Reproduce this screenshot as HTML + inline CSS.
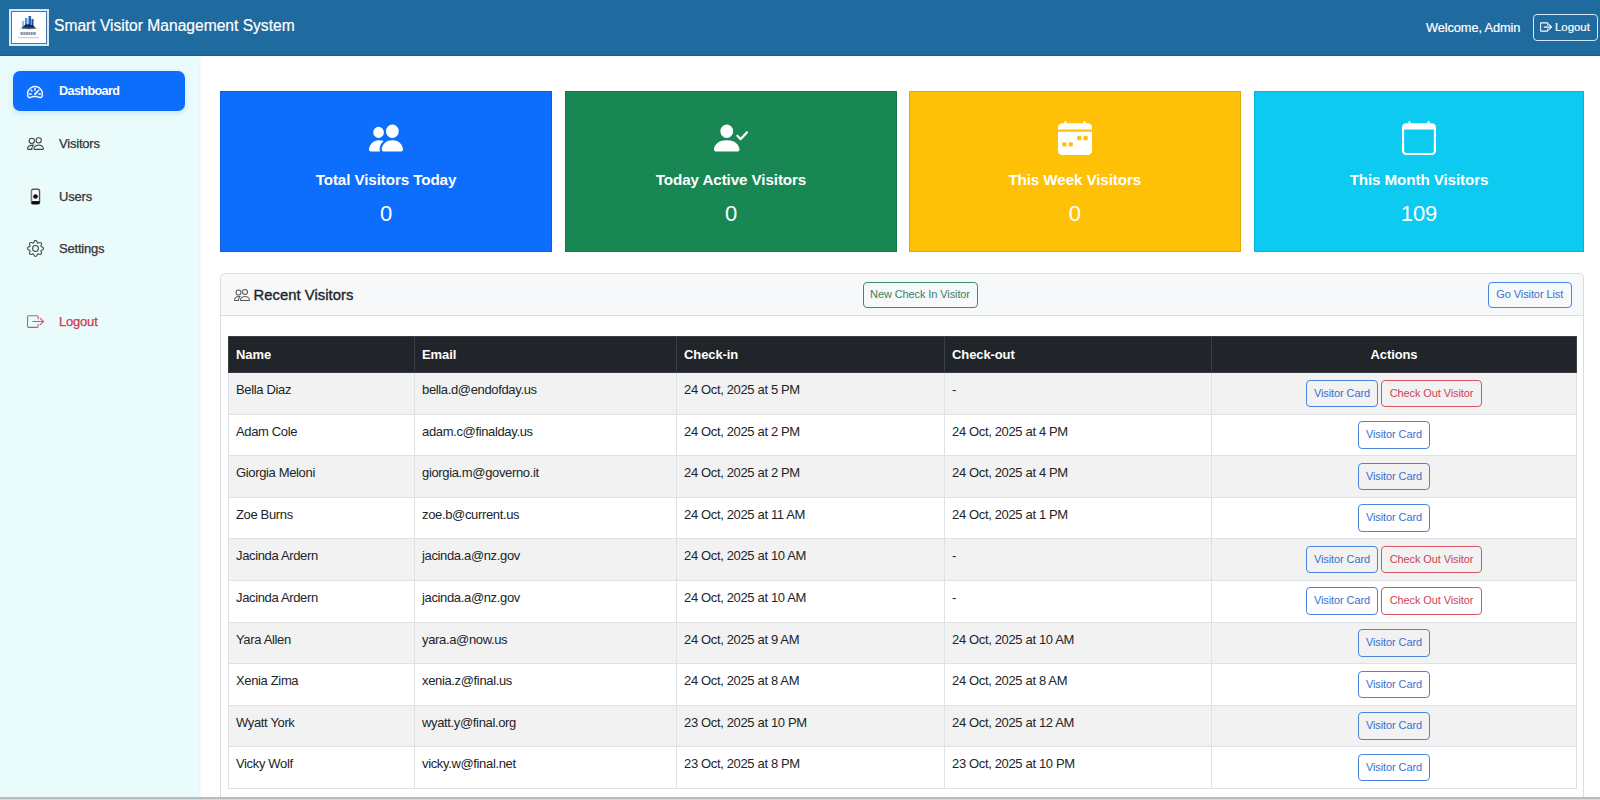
<!DOCTYPE html>
<html><head><meta charset="utf-8">
<style>
*{box-sizing:border-box;margin:0;padding:0}
html,body{width:1600px;height:800px;overflow:hidden;background:#fff;font-family:"Liberation Sans",sans-serif;color:#212529}
svg{display:block}
#hdr{position:absolute;left:0;top:0;width:1600px;height:56px;background:#1f6a9e;border-bottom:1px solid #1c5a86;z-index:2}
#logo{position:absolute;left:9px;top:9px;width:40px;height:37px;background:#fff;border:2px solid #cfe9ff;box-shadow:inset 0 0 0 1px #4a78a0}
#logo svg{position:absolute;left:0px;top:0px}
#title{position:absolute;left:54px;top:17px;font-size:15.6px;line-height:18px;color:#fff;white-space:nowrap;letter-spacing:0px;-webkit-text-stroke:0.2px #fff}
#welcome{position:absolute;left:1426px;top:20px;font-size:12.8px;line-height:15px;color:#fff;white-space:nowrap;letter-spacing:-0.1px;-webkit-text-stroke:0.2px #fff}
#hlogout{position:absolute;left:1533px;top:14px;width:65px;height:27px;border:1.8px solid #d2e8fc;-webkit-text-stroke:0.2px #fff;border-radius:4px;color:#fff;font-size:11.4px}
#hlogout svg{position:absolute;left:5.5px;top:6px}
#hlogout span{position:absolute;left:21px;top:6px;line-height:13px}
#side{position:absolute;left:0;top:56px;width:199px;height:744px;background:#eafbfb;box-shadow:1px 0 2px rgba(0,0,0,.08)}
.nav{position:absolute;left:13px;width:172px;height:40px;border-radius:7px;font-size:13px;color:#333}
.nav svg{position:absolute;left:14px;top:12px}
.nav .tx{position:absolute;left:46px;top:13px;line-height:15px;white-space:nowrap;letter-spacing:-0.2px;-webkit-text-stroke:0.25px currentColor}
.nav.active{background:#0d6efd;color:#fff;font-weight:bold;box-shadow:0 2px 6px rgba(13,110,253,.16)}
.nav.active .tx{letter-spacing:-0.6px;font-size:12.6px;-webkit-text-stroke:0}
.stat{position:absolute;top:91px;height:161px;color:#fff;text-align:center}
.stat svg{position:absolute;left:50%;top:30.25px;margin-left:-17px}
.stat svg.pp{top:29.2px}
.stat{box-shadow:inset 0 0 0 1px rgba(0,0,0,.12)}
.stat .st{position:absolute;left:0;right:0;top:79.5px;font-size:15.2px;line-height:18px;font-weight:bold;letter-spacing:-0.1px;white-space:nowrap}
.stat .sn{position:absolute;left:0;right:0;top:110.5px;font-size:22px;line-height:24px;white-space:nowrap}
.card{position:absolute;left:220px;top:273px;width:1364px;height:540px;border:1px solid #dcdcdc;border-radius:5px}
.chead{position:absolute;left:0;top:0;right:0;height:42px;background:#f7f8f9;border-bottom:1px solid #dcdcdc;border-radius:5px 5px 0 0}
.chead svg{position:absolute;left:13px;top:13px}
.chead .ct{position:absolute;left:32.5px;top:12.5px;font-size:14.8px;line-height:17px;letter-spacing:0.05px;color:#212529;white-space:nowrap;-webkit-text-stroke:0.35px #212529}
.btn{position:absolute;display:block;border:1.3px solid;border-radius:4px;font-size:11px;text-align:center;white-space:nowrap;background:transparent;letter-spacing:-0.1px}
.bp{border-color:#4a84dc;color:#3a6fcf}
.bd{border-color:#d95563;color:#cc4353}
.bs{border-color:#3f8c6c;color:#3a7f62}
table{position:absolute;left:228px;top:336px;width:1349px;border-collapse:collapse;font-size:13px}
th{background:#212529;color:#fff;text-align:left;height:36px;font-weight:bold;border:1px solid #3a3f44;padding:0 7px;letter-spacing:-0.1px;font-size:13px}
td{height:41.6px;border:1px solid #dee2e6;padding:0 7px;vertical-align:top;padding-top:9px;line-height:15px;white-space:nowrap;letter-spacing:-0.35px;color:#212529}
td.a{position:relative;padding:0}
td.a .w{position:absolute;left:0;right:0;top:6.5px;height:28px;text-align:center;font-size:0}
td.a .btn{position:relative;display:inline-block;height:27.5px;line-height:25px;font-size:11px;vertical-align:top}
tr.s td{background:#f2f2f2}
#bar{position:absolute;left:0;top:797px;width:1600px;height:3px;background:linear-gradient(#b8bcbe 0,#b8bcbe 2px,#d6d9db 2px)}
</style></head><body>
<div id="hdr">
  <div id="logo"><svg width="36" height="34" viewBox="0 0 36 34"><rect x="11" y="10" width="2.2" height="7" fill="#8fc0ea"/><rect x="14" y="7" width="2.4" height="10" fill="#4f8fd6"/><rect x="17.5" y="5" width="2.6" height="12" fill="#2a62b0"/><rect x="20.5" y="8" width="2" height="9" fill="#1d4f96"/><path d="M10.5 17.6c1.5-2.5 3-3 4.5-4.5 1 .8 2 .6 3-.6 1.2 1.6 2.6 1.8 3.5 1.2 1.2 1.3 2.5 2.4 3.5 3.9-3 .8-11.5.8-14.5 0z" fill="#0e2d5c"/><rect x="8.5" y="16.8" width="19" height=".6" fill="#9fb3c8"/><path d="M9.5 21h2.2v3H9.5zM12.3 21h1.6v3h-1.6zM14.5 21h2.4v3h-2.4zM17.5 21h1.5v3H17.5zM19.5 21h2.2v3h-2.2zM22.3 21h2.4v3h-2.4z" fill="#8194a8"/><rect x="7" y="26" width="21" height="1.2" fill="#c3cfdb"/></svg></div>
  <div id="title">Smart Visitor Management System</div>
  <div id="welcome">Welcome, Admin</div>
  <div id="hlogout"><svg width="12" height="12" viewBox="0 0 16 16" fill="#fff" stroke="#fff" stroke-width=".6"><path fill-rule="evenodd" d="M10 12.5a.5.5 0 0 1-.5.5h-8a.5.5 0 0 1-.5-.5v-9a.5.5 0 0 1 .5-.5h8a.5.5 0 0 1 .5.5v2a.5.5 0 0 0 1 0v-2A1.5 1.5 0 0 0 9.5 2h-8A1.5 1.5 0 0 0 0 3.5v9A1.5 1.5 0 0 0 1.5 14h8a1.5 1.5 0 0 0 1.5-1.5v-2a.5.5 0 0 0-1 0z"/><path fill-rule="evenodd" d="M15.854 8.354a.5.5 0 0 0 0-.708l-3-3a.5.5 0 0 0-.708.708L14.293 7.5H5.5a.5.5 0 0 0 0 1h8.793l-2.147 2.146a.5.5 0 0 0 .708.708z"/></svg><span>Logout</span></div>
</div>
<div id="side">
  <div class="nav active" style="top:14.5px"><svg width="16" height="16" viewBox="0 0 16 16" fill="#fff" stroke="#fff" stroke-width=".5" style="left:13.5px;top:13.5px"><path d="M8 4a.5.5 0 0 1 .5.5V6a.5.5 0 0 1-1 0V4.5A.5.5 0 0 1 8 4M3.732 5.732a.5.5 0 0 1 .707 0l.915.914a.5.5 0 1 1-.708.708l-.914-.915a.5.5 0 0 1 0-.707M2 10a.5.5 0 0 1 .5-.5h1.586a.5.5 0 0 1 0 1H2.5A.5.5 0 0 1 2 10m9.5 0a.5.5 0 0 1 .5-.5h1.5a.5.5 0 0 1 0 1H12a.5.5 0 0 1-.5-.5m.754-4.246a.39.39 0 0 0-.527-.02L7.547 9.31a.91.91 0 1 0 1.302 1.258l3.434-4.297a.39.39 0 0 0-.029-.518z"/><path fill-rule="evenodd" d="M0 10a8 8 0 1 1 15.547 2.661c-.442 1.253-1.845 1.602-2.932 1.25C11.309 13.488 9.475 13 8 13c-1.474 0-3.310.488-4.615.911-1.087.352-2.490.003-2.932-1.250A8 8 0 0 1 0 10m8-7a7 7 0 0 0-6.603 9.329c.203.575.923.876 1.680.630C4.397 12.533 6.358 12 8 12s3.604.532 4.923.96c.757.245 1.477-.056 1.680-.631A7 7 0 0 0 8 3"/></svg><div class="tx">Dashboard</div></div>
  <div class="nav" style="top:66.5px"><svg width="17" height="17" viewBox="0 0 16 16" fill="#444"><path d="M15 14s1 0 1-1-1-4-5-4-5 3-5 4 1 1 1 1zm-7.978-1L7 12.996c.001-.264.167-1.03.76-1.72C8.312 10.629 9.282 10 11 10c1.717 0 2.687.63 3.24 1.276.593.69.758 1.457.76 1.72l-.008.002-.014.002zM11 7a2 2 0 1 0 0-4 2 2 0 0 0 0 4m3-2a3 3 0 1 1-6 0 3 3 0 0 1 6 0M6.936 9.28a6 6 0 0 0-1.23-.247A7 7 0 0 0 5 9c-4 0-5 3-5 4q0 1 1 1h4.216A2.240 2.240 0 0 1 5 13c0-1.010.377-2.042 1.090-2.904.243-.294.526-.569.846-.816M4.920 10A5.500 5.500 0 0 0 4 13H1c0-.26.164-1.030.760-1.724.545-.636 1.492-1.256 3.160-1.275ZM1.500 5.500a3 3 0 1 1 6 0 3 3 0 0 1-6 0m3-2a2 2 0 1 0 0 4 2 2 0 0 0 0-4"/></svg><div class="tx">Visitors</div></div>
  <div class="nav" style="top:119.5px"><svg width="17" height="17" viewBox="0 0 16 16"><rect x="4.2" y="1.2" width="7.6" height="13.8" rx="1.6" fill="#fff" stroke="#555" stroke-width="1.3"/><circle cx="8" cy="8" r="2.2" fill="#111"/><rect x="4.2" y="12.3" width="7.6" height="2.7" fill="#0b0b14"/><rect x="3.6" y="2" width="0.7" height="12" fill="#e9b878" opacity=".7"/></svg><div class="tx">Users</div></div>
  <div class="nav" style="top:171.5px"><svg width="17" height="17" viewBox="0 0 16 16" fill="#444"><path d="M8 4.754a3.246 3.246 0 1 0 0 6.492 3.246 3.246 0 0 0 0-6.492M5.754 8a2.246 2.246 0 1 1 4.492 0 2.246 2.246 0 0 1-4.492 0"/><path d="M9.796 1.343c-.527-1.790-3.065-1.790-3.592 0l-.094.319a.873.873 0 0 1-1.255.52l-.292-.16c-1.640-.892-3.433.902-2.540 2.541l.159.292a.873.873 0 0 1-.52 1.255l-.319.094c-1.790.527-1.790 3.065 0 3.592l.319.094a.873.873 0 0 1 .52 1.255l-.16.292c-.892 1.640.901 3.434 2.541 2.540l.292-.159a.873.873 0 0 1 1.255.52l.094.319c.527 1.790 3.065 1.790 3.592 0l.094-.319a.873.873 0 0 1 1.255-.52l.292.16c1.640.893 3.434-.902 2.540-2.541l-.159-.292a.873.873 0 0 1 .52-1.255l.319-.094c1.790-.527 1.790-3.065 0-3.592l-.319-.094a.873.873 0 0 1-.52-1.255l.16-.292c.893-1.640-.902-3.433-2.541-2.540l-.292.159a.873.873 0 0 1-1.255-.52zm-2.633.283c.246-.835 1.428-.835 1.674 0l.094.319a1.873 1.873 0 0 0 2.693 1.115l.291-.16c.764-.415 1.600.42 1.184 1.185l-.159.292a1.873 1.873 0 0 0 1.116 2.692l.318.094c.835.246.835 1.428 0 1.674l-.319.094a1.873 1.873 0 0 0-1.115 2.693l.16.291c.415.764-.42 1.600-1.185 1.184l-.291-.159a1.873 1.873 0 0 0-2.693 1.116l-.094.318c-.246.835-1.428.835-1.674 0l-.094-.319a1.873 1.873 0 0 0-2.692-1.115l-.292.16c-.764.415-1.600-.42-1.184-1.185l.159-.291A1.873 1.873 0 0 0 1.945 8.930l-.319-.094c-.835-.246-.835-1.428 0-1.674l.319-.094A1.873 1.873 0 0 0 3.060 4.377l-.16-.292c-.415-.764.42-1.600 1.185-1.184l.292.159a1.873 1.873 0 0 0 2.692-1.115z"/></svg><div class="tx">Settings</div></div>
  <div class="nav" style="top:244.5px;color:#cf3a4c"><svg width="17" height="17" viewBox="0 0 16 16" fill="#c9596a"><path fill-rule="evenodd" d="M10 12.5a.5.5 0 0 1-.5.5h-8a.5.5 0 0 1-.5-.5v-9a.5.5 0 0 1 .5-.5h8a.5.5 0 0 1 .5.5v2a.5.5 0 0 0 1 0v-2A1.5 1.5 0 0 0 9.5 2h-8A1.5 1.5 0 0 0 0 3.5v9A1.5 1.5 0 0 0 1.5 14h8a1.5 1.5 0 0 0 1.5-1.5v-2a.5.5 0 0 0-1 0z"/><path fill-rule="evenodd" d="M15.854 8.354a.5.5 0 0 0 0-.708l-3-3a.5.5 0 0 0-.708.708L14.293 7.5H5.5a.5.5 0 0 0 0 1h8.793l-2.147 2.146a.5.5 0 0 0 .708.708z"/></svg><div class="tx">Logout</div></div>
</div>

<div class="stat" style="left:220px;width:332px;background:#0d6efd"><svg class="pp" width="34" height="36" viewBox="0 0 16 16" preserveAspectRatio="none" fill="#fff"><path d="M7 14s-1 0-1-1 1-4 5-4 5 3 5 4-1 1-1 1zm4-6a3 3 0 1 0 0-6 3 3 0 0 0 0 6m-5.784 6A2.24 2.24 0 0 1 5 13c0-1.355.68-2.75 1.936-3.72A6.3 6.3 0 0 0 5 9c-4 0-5 3-5 4s1 1 1 1zM4.5 8a2.5 2.5 0 1 0 0-5 2.5 2.5 0 0 0 0 5"/></svg><div class="st">Total Visitors Today</div><div class="sn">0</div></div>
<div class="stat" style="left:565px;width:332px;background:#198754"><svg class="pp" width="34" height="36" viewBox="0 0 16 16" preserveAspectRatio="none" fill="#fff"><path fill-rule="evenodd" d="M15.854 5.146a.5.5 0 0 1 0 .708l-3 3a.5.5 0 0 1-.708 0l-1.5-1.5a.5.5 0 0 1 .708-.708L12.5 7.793l2.646-2.647a.5.5 0 0 1 .708 0"/><path d="M1 14s-1 0-1-1 1-4 6-4 6 3 6 4-1 1-1 1zm5-6a3 3 0 1 0 0-6 3 3 0 0 0 0 6"/></svg><div class="st">Today Active Visitors</div><div class="sn">0</div></div>
<div class="stat" style="left:909px;width:331.5px;background:#ffc107"><svg width="34" height="34" viewBox="0 0 16 16" fill="#fff"><path d="M4 .5a.5.5 0 0 0-1 0V1H2a2 2 0 0 0-2 2v1h16V3a2 2 0 0 0-2-2h-1V.5a.5.5 0 0 0-1 0V1H4zM16 14V5H0v9a2 2 0 0 0 2 2h12a2 2 0 0 0 2-2M9.5 7h1a.5.5 0 0 1 .5.5v1a.5.5 0 0 1-.5.5h-1a.5.5 0 0 1-.5-.5v-1a.5.5 0 0 1 .5-.5m3 0h1a.5.5 0 0 1 .5.5v1a.5.5 0 0 1-.5.5h-1a.5.5 0 0 1-.5-.5v-1a.5.5 0 0 1 .5-.5M2 10.5a.5.5 0 0 1 .5-.5h1a.5.5 0 0 1 .5.5v1a.5.5 0 0 1-.5.5h-1a.5.5 0 0 1-.5-.5zm3.5-.5h1a.5.5 0 0 1 .5.5v1a.5.5 0 0 1-.5.5h-1a.5.5 0 0 1-.5-.5v-1a.5.5 0 0 1 .5-.5"/></svg><div class="st">This Week Visitors</div><div class="sn">0</div></div>
<div class="stat" style="left:1254px;width:330px;background:#0dcaf0"><svg width="34" height="34" viewBox="0 0 16 16" fill="#fff"><path d="M3.5 0a.5.5 0 0 1 .5.5V1h8V.5a.5.5 0 0 1 1 0V1h1a2 2 0 0 1 2 2v11a2 2 0 0 1-2 2H2a2 2 0 0 1-2-2V3a2 2 0 0 1 2-2h1V.5a.5.5 0 0 1 .5-.5M1 4v10a1 1 0 0 0 1 1h12a1 1 0 0 0 1-1V4z"/></svg><div class="st">This Month Visitors</div><div class="sn">109</div></div>

<div class="card"><div class="chead"><svg width="16" height="16" viewBox="0 0 16 16" fill="#555"><path d="M15 14s1 0 1-1-1-4-5-4-5 3-5 4 1 1 1 1zm-7.978-1L7 12.996c.001-.264.167-1.03.76-1.72C8.312 10.629 9.282 10 11 10c1.717 0 2.687.63 3.24 1.276.593.69.758 1.457.76 1.72l-.008.002-.014.002zM11 7a2 2 0 1 0 0-4 2 2 0 0 0 0 4m3-2a3 3 0 1 1-6 0 3 3 0 0 1 6 0M6.936 9.28a6 6 0 0 0-1.23-.247A7 7 0 0 0 5 9c-4 0-5 3-5 4q0 1 1 1h4.216A2.240 2.240 0 0 1 5 13c0-1.010.377-2.042 1.090-2.904.243-.294.526-.569.846-.816M4.920 10A5.500 5.500 0 0 0 4 13H1c0-.26.164-1.030.760-1.724.545-.636 1.492-1.256 3.160-1.275ZM1.500 5.500a3 3 0 1 1 6 0 3 3 0 0 1-6 0m3-2a2 2 0 1 0 0 4 2 2 0 0 0 0-4"/></svg><div class="ct">Recent Visitors</div></div></div>
<div class="btn bs" style="left:862.5px;top:282px;width:115px;height:26px;line-height:23.5px">New Check In Visitor</div>
<div class="btn bp" style="left:1488px;top:282px;width:83.5px;height:26px;line-height:23.5px">Go Visitor List</div>

<table>
<tr><th style="width:186px">Name</th><th style="width:262px">Email</th><th style="width:268px">Check-in</th><th style="width:267px">Check-out</th><th style="text-align:center">Actions</th></tr>
<tr class="s"><td>Bella Diaz</td><td>bella.d@endofday.us</td><td>24 Oct, 2025 at 5 PM</td><td>-</td><td class="a"><div class="w"><span class="btn bp" style="width:72px">Visitor Card</span><span class="btn bd" style="width:101px;margin-left:3px">Check Out Visitor</span></div></td></tr>
<tr><td>Adam Cole</td><td>adam.c@finalday.us</td><td>24 Oct, 2025 at 2 PM</td><td>24 Oct, 2025 at 4 PM</td><td class="a"><div class="w"><span class="btn bp" style="width:72px">Visitor Card</span></div></td></tr>
<tr class="s"><td>Giorgia Meloni</td><td>giorgia.m@governo.it</td><td>24 Oct, 2025 at 2 PM</td><td>24 Oct, 2025 at 4 PM</td><td class="a"><div class="w"><span class="btn bp" style="width:72px">Visitor Card</span></div></td></tr>
<tr><td>Zoe Burns</td><td>zoe.b@current.us</td><td>24 Oct, 2025 at 11 AM</td><td>24 Oct, 2025 at 1 PM</td><td class="a"><div class="w"><span class="btn bp" style="width:72px">Visitor Card</span></div></td></tr>
<tr class="s"><td>Jacinda Ardern</td><td>jacinda.a@nz.gov</td><td>24 Oct, 2025 at 10 AM</td><td>-</td><td class="a"><div class="w"><span class="btn bp" style="width:72px">Visitor Card</span><span class="btn bd" style="width:101px;margin-left:3px">Check Out Visitor</span></div></td></tr>
<tr><td>Jacinda Ardern</td><td>jacinda.a@nz.gov</td><td>24 Oct, 2025 at 10 AM</td><td>-</td><td class="a"><div class="w"><span class="btn bp" style="width:72px">Visitor Card</span><span class="btn bd" style="width:101px;margin-left:3px">Check Out Visitor</span></div></td></tr>
<tr class="s"><td>Yara Allen</td><td>yara.a@now.us</td><td>24 Oct, 2025 at 9 AM</td><td>24 Oct, 2025 at 10 AM</td><td class="a"><div class="w"><span class="btn bp" style="width:72px">Visitor Card</span></div></td></tr>
<tr><td>Xenia Zima</td><td>xenia.z@final.us</td><td>24 Oct, 2025 at 8 AM</td><td>24 Oct, 2025 at 8 AM</td><td class="a"><div class="w"><span class="btn bp" style="width:72px">Visitor Card</span></div></td></tr>
<tr class="s"><td>Wyatt York</td><td>wyatt.y@final.org</td><td>23 Oct, 2025 at 10 PM</td><td>24 Oct, 2025 at 12 AM</td><td class="a"><div class="w"><span class="btn bp" style="width:72px">Visitor Card</span></div></td></tr>
<tr><td>Vicky Wolf</td><td>vicky.w@final.net</td><td>23 Oct, 2025 at 8 PM</td><td>23 Oct, 2025 at 10 PM</td><td class="a"><div class="w"><span class="btn bp" style="width:72px">Visitor Card</span></div></td></tr>
</table>
<div id="bar"></div>
</body></html>
